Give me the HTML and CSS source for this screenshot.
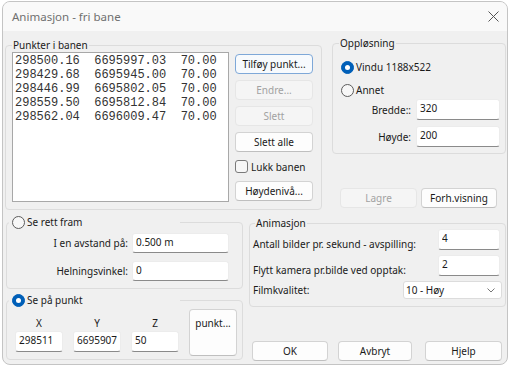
FILE: index.html
```html
<!DOCTYPE html>
<html lang="no">
<head>
<meta charset="utf-8">
<title>Animasjon - fri bane</title>
<link rel="stylesheet" href="styles.css">
</head>
<body>
<div class="window">
  <div class="titlebar">
    <span class="title">Animasjon - fri bane</span>
    <svg class="close" width="11" height="11" viewBox="0 0 11 11"><path d="M0.5 0.5 L10.5 10.5 M10.5 0.5 L0.5 10.5" stroke="#555" stroke-width="1" fill="none"/></svg>
  </div>

  <div class="row row1">
    <div class="group g-punkter">
      <div class="legend">Punkter i banen</div>
      <div class="punkter-body">
        <div class="listbox"><div>298500.16  6695997.03  70.00</div><div>298429.68  6695945.00  70.00</div><div>298446.99  6695802.05  70.00</div><div>298559.50  6695812.84  70.00</div><div>298562.04  6696009.47  70.00</div></div>
        <div class="btncol">
          <button class="btn default">Tilføy punkt...</button>
          <button class="btn" disabled>Endre...</button>
          <button class="btn" disabled>Slett</button>
          <button class="btn">Slett alle</button>
          <div class="check"><span class="box"></span><span>Lukk banen</span></div>
          <button class="btn hoyde">Høydenivå...</button>
        </div>
      </div>
    </div>

    <div class="rightcol">
      <div class="group g-oppl">
        <div class="legend">Oppløsning</div>
        <div class="oppl-body">
          <div class="radio-row"><span class="radio on"><span class="dot"></span></span><span>Vindu 1188x522</span></div>
          <div class="radio-row second"><span class="radio"></span><span>Annet</span></div>
          <div class="form-row first"><span>Bredde::</span><input class="edit w84" type="text" value="320"></div>
          <div class="form-row"><span>Høyde:</span><input class="edit w84" type="text" value="200"></div>
        </div>
      </div>
      <div class="btnrow">
        <button class="btn lagre" disabled>Lagre</button>
        <button class="btn forh">Forh.visning</button>
      </div>
    </div>
  </div>

  <div class="row row2">
    <div class="leftcol">
      <div class="group g-rett">
        <div class="legend rlegend"><span class="radio"></span><span>Se rett fram</span></div>
        <div class="rett-body">
          <div class="lrow"><span>I en avstand på:</span><input class="edit w97" type="text" value="0.500 m"></div>
          <div class="lrow second"><span>Helningsvinkel:</span><input class="edit w97" type="text" value="0"></div>
        </div>
      </div>
      <div class="group g-punkt">
        <div class="legend rlegend"><span class="radio on"><span class="dot"></span></span><span>Se på punkt</span></div>
        <div class="punkt-body">
          <div class="coord"><span class="clabel">X</span><input class="edit w48" type="text" value="298511"></div>
          <div class="coord"><span class="clabel">Y</span><input class="edit w48" type="text" value="6695907"></div>
          <div class="coord"><span class="clabel">Z</span><input class="edit w48" type="text" value="50"></div>
          <button class="btn punktbtn">punkt...</button>
        </div>
      </div>
    </div>

    <div class="rightcol2">
      <div class="group g-anim">
        <div class="legend">Animasjon</div>
        <div class="anim-body">
          <div class="arow"><span>Antall bilder pr. sekund - avspilling:</span><input class="edit w62" type="text" value="4"></div>
          <div class="arow"><span>Flytt kamera pr.bilde ved opptak:</span><input class="edit w62" type="text" value="2"></div>
          <div class="arow sel-row"><span>Filmkvalitet:</span>
            <div class="select"><span>10 - Høy</span><svg width="8" height="5" viewBox="0 0 8 5"><path d="M0.5 0.5 L4 4 L7.5 0.5" stroke="#777" stroke-width="1" fill="none"/></svg></div>
          </div>
        </div>
      </div>
      <div class="bottombtns">
        <button class="btn ok">OK</button>
        <button class="btn avbryt">Avbryt</button>
        <button class="btn hjelp">Hjelp</button>
      </div>
    </div>
  </div>
</div>
</body>
</html>
```

FILE: styles.css
```css
* { box-sizing: border-box; }
html, body { margin: 0; padding: 0; background: #ffffff; }
body {
  font-family: "Noto Sans", "Liberation Sans", sans-serif;
  font-size: 10px;
  color: #1a1a1a;
}

.window {
  margin: 1px 0 0 2px;
  width: 506px;
  height: 364px;
  border: 1px solid #c4c4c4;
  border-radius: 8px;
  background: #f0f0f0;
  overflow: hidden;
  display: flex;
  flex-direction: column;
}

.titlebar {
  height: 29px;
  flex: none;
  background: #f9f9f9;
  display: flex;
  align-items: center;
  justify-content: space-between;
  padding: 0 8px 0 9px;
}
.title { font-size: 11.5px; line-height: 14px; color: #707070; }
.close { display: block; }

.row { display: flex; align-items: flex-start; flex: none; }
.row1 { padding-left: 2px; }
.row2 { padding-left: 3px; }

.group {
  border: 1px solid #dcdcdc;
  border-radius: 4px;
}
.group > .legend {
  width: fit-content;
  margin: -7px 0 0 6px;
  padding: 0 1px;
  line-height: 12px;
  height: 12px;
  background: #f0f0f0;
}

/* Punkter i banen */
.g-punkter { width: 317px; height: 165px; margin-top: 14px; }
.punkter-body { display: flex; padding: 1px 0 0 6px; }
.listbox {
  width: 217px;
  height: 150px;
  background: #ffffff;
  border: 1px solid #a8a8a8;
  padding: 1px 0 0 2px;
  font-family: "Liberation Mono", monospace;
  font-size: 12px;
  line-height: 14px;
  white-space: pre;
  color: #333333;
}
.btncol {
  display: flex;
  flex-direction: column;
  gap: 6px;
  margin-left: 6px;
  padding-top: 2px;
  width: 78px;
}

.btn {
  font-family: inherit;
  font-size: 10px;
  height: 20px;
  padding: 0;
  margin: 0;
  background: #fdfdfd;
  border: 1px solid #d3d3d3;
  border-bottom-color: #bfbfbf;
  border-radius: 4px;
  color: #1a1a1a;
  line-height: 12px;
}
.btn.default { border-color: #7ea8d8; background: #f7fafd; }
.btn:disabled { background: #f5f5f5; border-color: #e6e6e6; color: #a2a2a2; }

.check { display: flex; align-items: center; height: 13px; margin-top: 2px; }
.check .box {
  width: 13px; height: 13px;
  border: 1px solid #7a7a7a;
  border-radius: 3px;
  background: #f7f7f7;
  margin-right: 3px;
}
.hoyde { margin-top: 2px; }

/* Oppløsning */
.rightcol { margin-left: 10px; width: 174px; }
.g-oppl { width: 174px; height: 111px; margin-top: 12px; }
.oppl-body { padding: 11px 5px 0 8px; }
.radio-row { display: flex; align-items: center; height: 14px; }
.radio-row.second { margin-top: 9px; }
.radio {
  width: 13px; height: 13px;
  border: 1px solid #5c5c5c;
  border-radius: 50%;
  background: #f7f7f7;
  margin-right: 2px;
  display: inline-flex;
  align-items: center;
  justify-content: center;
  flex: none;
}
.radio.on { background: #005fb8; border-color: #005fb8; }
.radio .dot { width: 5px; height: 5px; border-radius: 50%; background: #ffffff; }

.form-row { display: flex; justify-content: flex-end; align-items: center; gap: 5px; margin-top: 6px; }
.form-row.first { margin-top: 2px; }

.edit {
  font-family: inherit;
  font-size: 10px;
  color: #1a1a1a;
  height: 21px;
  background: #ffffff;
  border: 1px solid #ececec;
  border-bottom-color: #8a8a8a;
  border-radius: 3px;
  padding: 0 3px 3px 3px;
  margin: 0;
  outline: none;
}
.w84 { width: 84px; }
.w97 { width: 97px; height: 20px; }
.w48 { width: 48px; }
.w62 { width: 62px; }

.btnrow { display: flex; gap: 4px; margin-top: 34px; padding-left: 8px; }
.lagre { width: 77px; }
.forh { width: 76px; }

/* Row 2 left */
.leftcol { width: 237px; }
.g-rett { height: 67px; margin-top: 12px; }
.group > .legend.rlegend {
  width: 171px;
  margin: -8px 0 0 2px;
  padding: 0 0 0 3px;
  height: 14px;
  line-height: 14px;
  display: flex;
  align-items: center;
}
.rett-body { padding: 4px 13px 0 0; }
.lrow { display: flex; justify-content: flex-end; align-items: center; gap: 4px; }
.lrow.second { margin-top: 8px; }

.g-punkt { margin-top: 11px; height: 60px; }
.punkt-body { display: flex; align-items: flex-start; gap: 10px; padding: 2px 0 0 8px; }
.coord { display: flex; flex-direction: column; align-items: center; width: 48px; padding-top: 8px; }
.clabel { line-height: 12px; height: 12px; margin-bottom: 2px; }
.punktbtn { width: 48px; height: 47px; padding-top: 7px; display: flex; justify-content: center; align-items: flex-start; }

/* Row 2 right */
.rightcol2 { margin-left: 6px; width: 257px; }
.g-anim { width: 257px; height: 84px; margin-top: 13px; }
.g-anim > .legend { margin-left: 5px; }
.anim-body { padding: 0 3px 0 3px; }
.arow { display: flex; justify-content: space-between; align-items: flex-end; line-height: 12px; }
.arow + .arow { margin-top: 5px; }
.arow .edit { margin-right: 2px; }
.arow.sel-row { align-items: center; }
.select {
  width: 99px;
  height: 18px;
  background: #ffffff;
  border: 1px solid #dcdcdc;
  border-radius: 3px;
  display: flex;
  align-items: center;
  justify-content: space-between;
  padding: 0 6px 0 2px;
}

.bottombtns { display: flex; margin-top: 34px; padding-left: 3px; }
.ok { width: 76px; }
.avbryt { width: 74px; margin-left: 10px; }
.hjelp { width: 77px; margin-left: 13px; }
```
